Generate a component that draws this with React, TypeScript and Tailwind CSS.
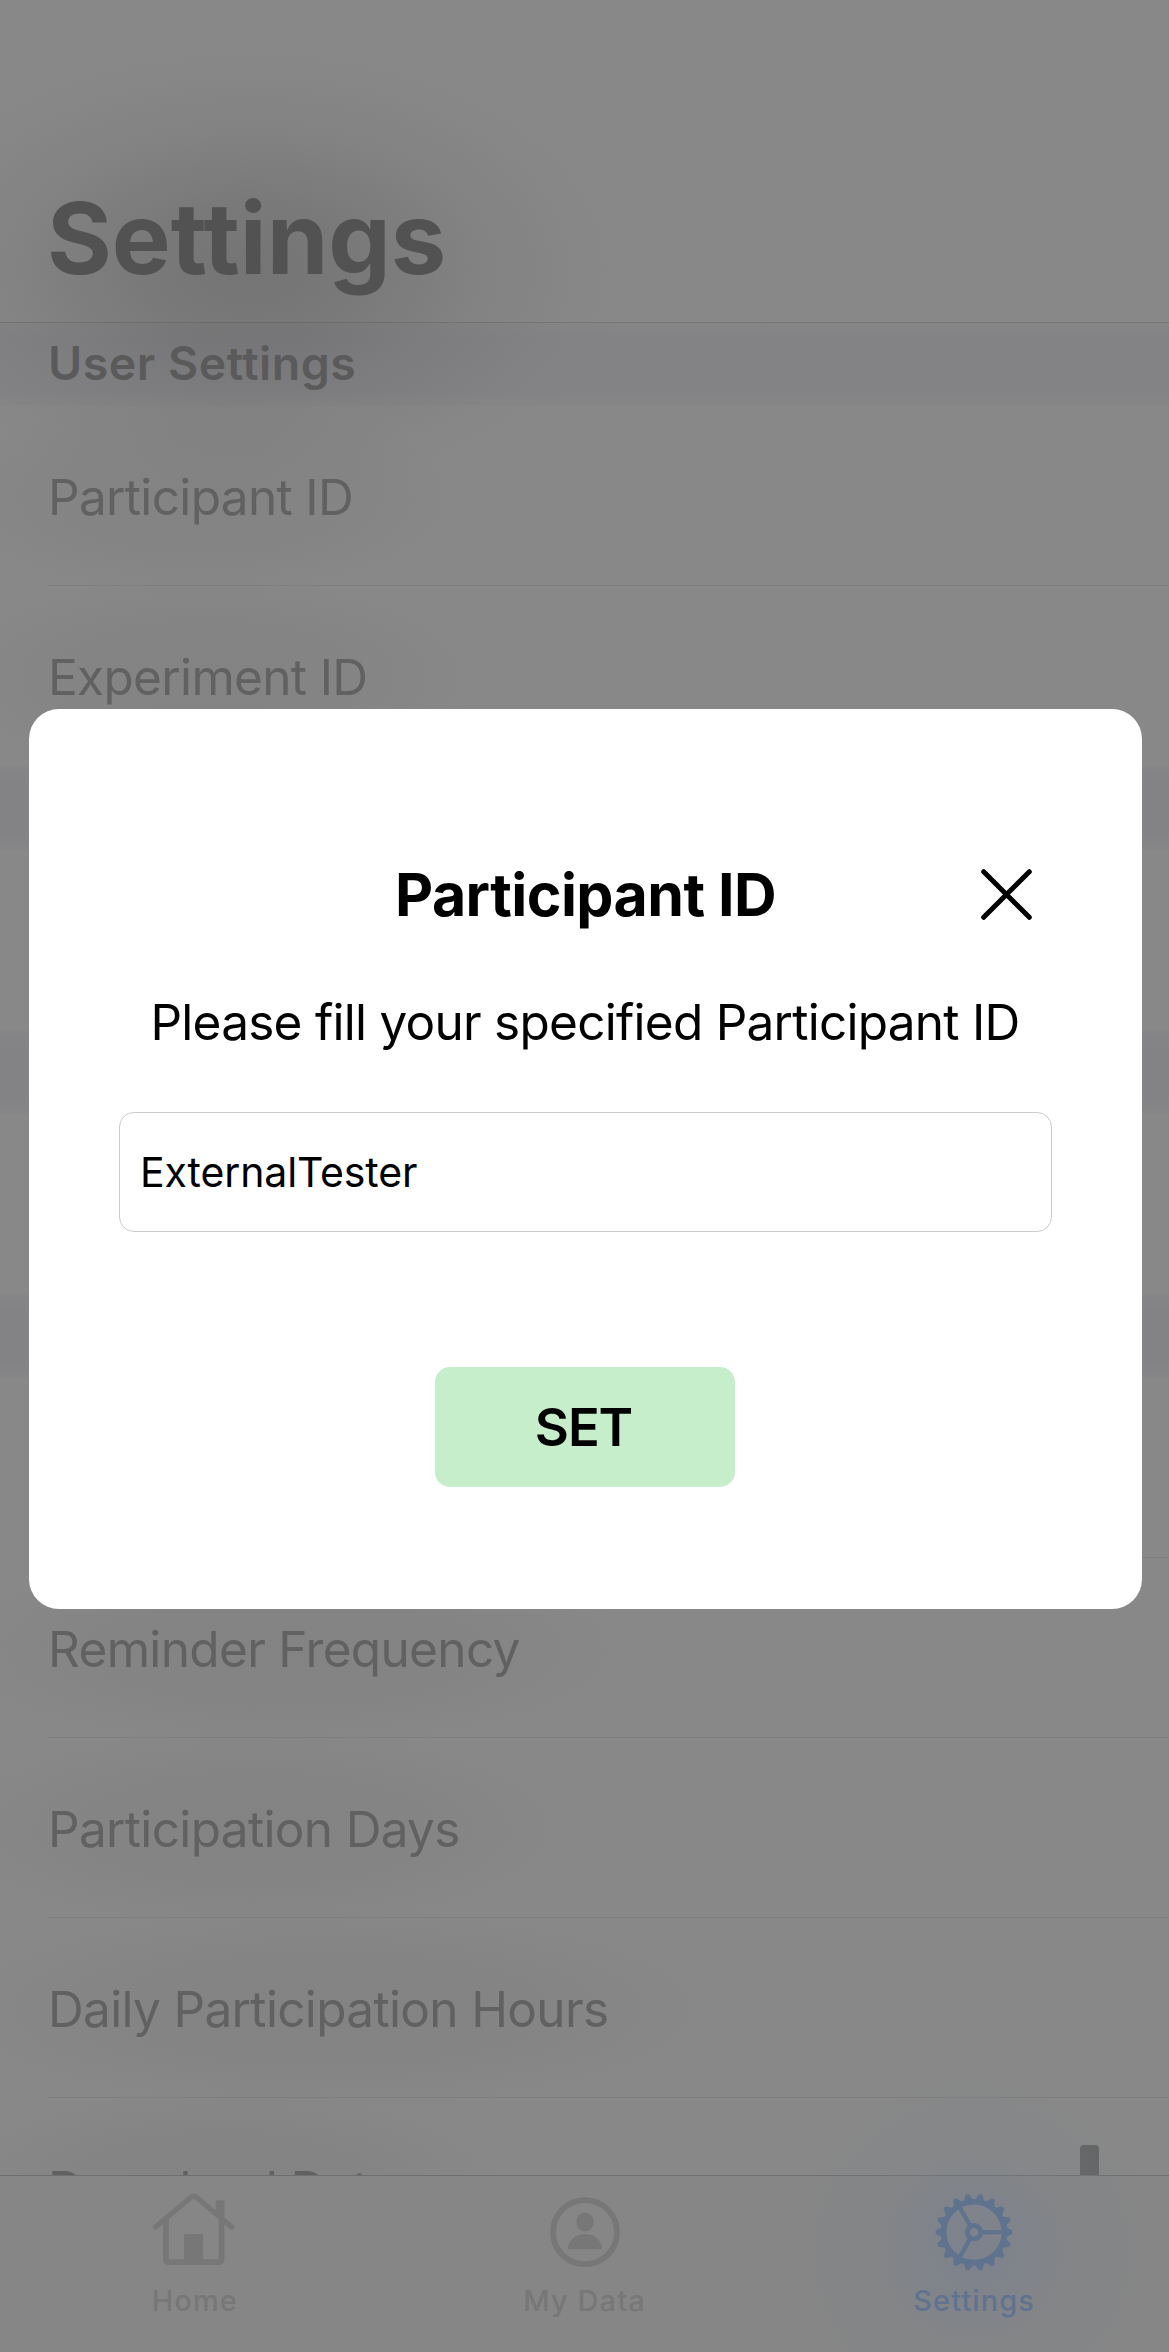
import type { ReactNode } from "react";

function SectionHeader({ title }: { title?: string }) {
  return (
    <div className="flex h-[84px] shrink-0 items-center bg-[linear-gradient(#868687,#838386_18%,#838386_82%,#868687)] pl-[48px] text-[46.5px] font-semibold tracking-[0.5px] text-[#5a5a5b]">
      {title && <h2 className="relative z-20">{title}</h2>}
    </div>
  );
}

function Row({ label, last = false }: { label?: string; last?: boolean }) {
  return (
    <div className="h-[180px] shrink-0 pl-[48px]">
      <div
        className={
          last
            ? "flex h-full items-center pt-[2px]"
            : "flex h-full items-center border-b border-[#7f7f7f] pt-[3px]"
        }
      >
        {label && (
          <span className="relative text-[49.5px] tracking-[-0.66px] whitespace-nowrap text-[#616161]">
            <span className="absolute -inset-x-[110px] -inset-y-[65px] bg-[radial-gradient(closest-side,rgba(115,115,115,0.24),rgba(115,115,115,0.18)_50%,transparent)]" />
            <span className="relative">{label}</span>
          </span>
        )}
      </div>
    </div>
  );
}

function HomeIcon() {
  return (
    <svg className="-ml-[2px]" width="87" height="82" viewBox="0 0 87 82" fill="none" stroke="currentColor">
      <path d="M5.5 37 L41 7.2 Q43.7 5 46.4 7.2 L81.7 37" strokeWidth="5.2" strokeLinecap="round" />
      <path d="M16 30 V69 Q16 72.2 19.2 72.2 H68.3 Q71.5 72.2 71.5 69 V30" strokeWidth="5.7" />
      <path d="M65.7 23 V12 Q65.7 10.2 67.5 10.2 H72.6 Q74.4 10.2 74.4 12 V30 Z" fill="currentColor" stroke="none" />
      <path d="M34 73 V45.8 Q34 44 35.8 44 H51.4 Q53.2 44 53.2 45.8 V73 Z" fill="currentColor" stroke="none" />
    </svg>
  );
}

function PersonIcon() {
  return (
    <svg width="80" height="82" viewBox="0 0 80 82" fill="currentColor">
      <circle cx="40" cy="42.2" r="32" fill="none" stroke="currentColor" strokeWidth="5.8" />
      <ellipse cx="40" cy="32" rx="8.7" ry="9.4" />
      <path d="M24.5 59.3 Q22.8 59.3 22.9 57.4 C23.8 50 31 43.9 40 43.9 C49 43.9 56.2 50 57.1 57.4 Q57.2 59.3 55.5 59.3 Z" />
    </svg>
  );
}

const teeth = Array.from({ length: 18 }, (_, i) => i * 20);

function GearIcon() {
  return (
    <svg width="82" height="82" viewBox="-41 -42.2 82 82" fill="currentColor" stroke="currentColor">
      <circle r="30.4" fill="none" strokeWidth="5.6" />
      <circle r="6.7" fill="none" strokeWidth="4.8" />
      {[0, 120, 240].map((angle) => (
        <path key={angle} d="M8 0 H29" strokeWidth="4.2" transform={`rotate(${angle})`} />
      ))}
      {teeth.map((angle) => (
        <path
          key={angle}
          d="M31.5 -4 L37.4 -1.1 V1.1 L31.5 4 Z"
          strokeWidth="2"
          strokeLinejoin="round"
          transform={`rotate(${angle})`}
        />
      ))}
    </svg>
  );
}

function Tab({ icon, label, active = false }: { icon: ReactNode; label: string; active?: boolean }) {
  return (
    <button
      className={
        active
          ? "relative flex flex-1 flex-col items-center pt-[14px] text-[#5f738f]"
          : "relative flex flex-1 flex-col items-center pt-[14px] text-[#777777]"
      }
    >
      {icon}
      <span className="mt-[10px] text-[29px] leading-[38px] font-medium tracking-[1.1px]">{label}</span>
    </button>
  );
}

export default function App() {
  return (
    <div className="relative flex h-[2352px] w-[1169px] flex-col overflow-hidden bg-[#888888] font-[Inter,sans-serif]">
      <header className="relative z-10 -mb-[1px] flex h-[323px] shrink-0 items-end border-b border-[#757577] pb-[24px] pl-[47px]">
        <div className="pointer-events-none absolute top-[40px] -left-[130px] h-[460px] w-[760px] bg-[radial-gradient(closest-side,rgba(78,78,78,0.34),rgba(82,82,82,0.27)_30%,rgba(90,90,90,0.13)_60%,rgba(105,105,105,0.04)_85%,transparent)]" />
        <h1 className="relative text-[99px] leading-[120px] font-bold text-[#525252]">Settings</h1>
      </header>

      <main className="flex h-[1853px] shrink-0 flex-col overflow-hidden">
        <SectionHeader title="User Settings" />
        <Row label="Participant ID" />
        <Row label="Experiment ID" last />
        <SectionHeader />
        <Row last />
        <SectionHeader />
        <Row last />
        <SectionHeader />
        <Row />
        <Row label="Reminder Frequency" />
        <Row label="Participation Days" />
        <Row label="Daily Participation Hours" />
        <div className="flex h-[180px] shrink-0 justify-between pr-[70px]">
          <Row label="Download Data" last />
          <div className="mt-[47px] h-[90px] w-[19px] rounded-[4px] bg-[#646464]" />
        </div>
      </main>

      <div className="pointer-events-none absolute top-[2060px] left-[783px] h-[380px] w-[380px] bg-[radial-gradient(closest-side,rgba(112,124,150,0.45),rgba(122,130,140,0.22)_50%,transparent)]" />

      <nav className="flex h-[177px] shrink-0 border-t border-[#6f6f70] bg-[#80808033]">
        <Tab icon={<HomeIcon />} label="Home" />
        <Tab icon={<PersonIcon />} label="My Data" />
        <Tab icon={<GearIcon />} label="Settings" active />
      </nav>

      <section
        role="dialog"
        className="absolute top-[709px] left-[29px] z-20 flex h-[900px] w-[1113px] flex-col items-center rounded-[30px] bg-white pt-[146px] text-black"
      >
        <div className="relative flex h-[80px] w-full items-center justify-center">
          <h2 className="text-[59px] leading-[80px] font-bold tracking-[-0.55px]">Participant ID</h2>
          <button aria-label="Close" className="absolute top-[13px] right-[109px]">
            <svg width="53" height="53" viewBox="0 0 53 53" stroke="black" strokeWidth="5" strokeLinecap="round">
              <path d="M3.7 3.7 L49.3 49.3 M49.3 3.7 L3.7 49.3" />
            </svg>
          </button>
        </div>
        <p className="mt-[47px] mr-[1px] text-[49.5px] leading-[80px] tracking-[-0.74px] whitespace-nowrap">
          Please fill your specified Participant ID
        </p>
        <input
          defaultValue="ExternalTester"
          className="mt-[50px] h-[120px] w-[933px] rounded-[15px] border border-[#cccccc] pl-[20px] text-[41px] tracking-[-0.13px] outline-none"
        />
        <button className="mt-[135px] mr-[2px] h-[120px] w-[300px] rounded-[15px] bg-[#c7eecb] pr-[2px] text-[52.5px] font-semibold tracking-[-1.1px]">
          SET
        </button>
      </section>
    </div>
  );
}
